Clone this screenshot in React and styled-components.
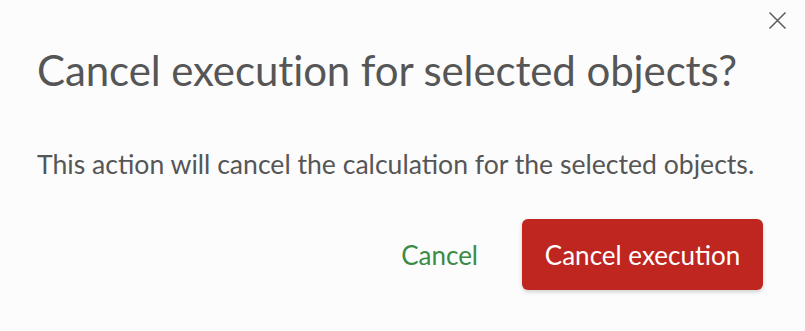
import React from 'react';
import styled, { createGlobalStyle } from 'styled-components';

const GlobalStyle = createGlobalStyle`
  html, body {
    margin: 0;
    padding: 0;
    background: #fcfcfd;
  }
  body {
    font-family: Lato, "Open Sans", sans-serif;
  }
`;

const Dialog = styled.div`
  position: relative;
  box-sizing: border-box;
  width: 805px;
  height: 331px;
  padding: 42px 42px 0 37px;
  background: #fcfcfd;
  display: flex;
  flex-direction: column;
`;

const CloseButton = styled.button`
  position: absolute;
  top: 8px;
  right: 16px;
  width: 24px;
  height: 24px;
  padding: 0;
  border: 0;
  background: none;
  cursor: pointer;
  display: flex;
  align-items: center;
  justify-content: center;
`;

const Title = styled.h2`
  margin: 0;
  font-size: 42px;
  font-weight: 400;
  line-height: 56px;
  color: #565656;
  letter-spacing: -0.1px;
  white-space: nowrap;
`;

const Text = styled.p`
  margin: 49px 0 0;
  font-size: 26.6px;
  line-height: 34px;
  color: #565656;
  white-space: nowrap;
`;

const Footer = styled.div`
  display: flex;
  justify-content: flex-end;
  align-items: center;
  gap: 44px;
  margin-top: 38px;
`;

const LinkButton = styled.button`
  border: 0;
  background: none;
  padding: 0;
  font-family: inherit;
  font-size: 26px;
  color: #3a8b46;
  cursor: pointer;
`;

const PrimaryButton = styled.button`
  box-sizing: border-box;
  width: 241px;
  height: 71px;
  border: 0;
  border-radius: 6px;
  background: #be261f;
  color: #ffffff;
  font-family: inherit;
  font-size: 26px;
  box-shadow: 0 2px 4px rgba(0, 0, 0, 0.18);
  cursor: pointer;
`;

const CloseIcon = () => (
  <svg width="19" height="19" viewBox="0 0 19 19" fill="none">
    <path d="M1.5 1.5 L17.5 17.5 M17.5 1.5 L1.5 17.5" stroke="#5f5f5f" strokeWidth="1.6" />
  </svg>
);

const App = () => (
  <>
    <GlobalStyle />
    <Dialog>
      <CloseButton aria-label="Close">
        <CloseIcon />
      </CloseButton>
      <Title>Cancel execution for selected objects?</Title>
      <Text>This action will cancel the calculation for the selected objects.</Text>
      <Footer>
        <LinkButton>Cancel</LinkButton>
        <PrimaryButton>Cancel execution</PrimaryButton>
      </Footer>
    </Dialog>
  </>
);

export default App;
